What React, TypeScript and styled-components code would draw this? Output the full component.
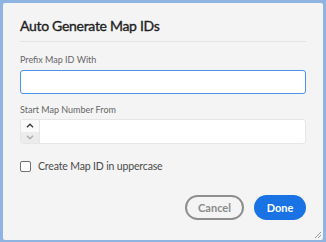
import React from 'react';
import styled, { createGlobalStyle } from 'styled-components';

const Global = createGlobalStyle`
  html, body {
    margin: 0;
    padding: 0;
    background: #8fb4e2;
  }
  * {
    box-sizing: border-box;
  }
`;

const Frame = styled.div`
  width: 326px;
  height: 242px;
  padding: 3px 3px 2px 3px;
  background: #8fb4e2;
  font-family: Lato, "Liberation Sans", sans-serif;
`;

const Dialog = styled.div`
  position: relative;
  height: 100%;
  background: #f4f4f4;
  border-radius: 2px;
  padding: 0 17px;
  display: flex;
  flex-direction: column;
`;

const Title = styled.div`
  font-size: 14px;
  letter-spacing: -0.3px;
  font-weight: 400;
  color: #1e1e1e;
  line-height: 22px;
  padding-top: 12px;
  padding-bottom: 4px;
  border-bottom: 1px solid #e3e3e3;
  -webkit-text-stroke: 0.35px #1e1e1e;
`;

const Label = styled.div`
  font-size: 9px;
  color: #666;
  line-height: 14px;
  margin-top: ${p => p.$top}px;
`;

const TextInput = styled.div`
  margin-top: ${p => p.$top}px;
  height: ${p => p.$h}px;
  background: #fff;
  border: 1px solid ${p => (p.$focused ? '#4b92e8' : '#e6e6e6')};
  border-radius: 3px;
  display: flex;
  overflow: hidden;
`;

const Stepper = styled.div`
  width: 19px;
  display: flex;
  flex-direction: column;
  border-right: 1px solid #e6e6e6;
`;

const StepBtn = styled.div`
  flex: 1;
  display: flex;
  align-items: center;
  justify-content: center;
  background: ${p => (p.$dim ? '#ececec' : '#fafafa')};
`;

const CheckRow = styled.div`
  margin-top: 14px;
  display: flex;
  align-items: center;
  gap: 7px;
  font-size: 10.5px;
  letter-spacing: -0.15px;
  line-height: 17px;
  color: #4a4a4a;
`;

const Box = styled.div`
  width: 11px;
  height: 11px;
  border: 1.5px solid #6f6f6f;
  border-radius: 2px;
  background: #fff;
`;

const Footer = styled.div`
  margin-top: 20px;
  display: flex;
  justify-content: flex-end;
  gap: 10px;
`;

const Button = styled.div`
  height: 25px;
  border-radius: 13px;
  display: flex;
  align-items: center;
  justify-content: center;
  font-size: 11px;
  font-weight: 700;
  width: ${p => p.$w}px;
  color: ${p => (p.$primary ? '#fff' : '#8a8a8a')};
  background: ${p => (p.$primary ? '#1a73e4' : 'transparent')};
  border: ${p => (p.$primary ? 'none' : '2px solid #8e8e8e')};
`;

const Grip = styled.svg`
  position: absolute;
  right: 1px;
  bottom: 1px;
`;

const Chevron = ({ up, color }) => (
  <svg width="8" height="5" viewBox="0 0 8 5">
    <path
      d={up ? 'M1 4.2 L4 1.2 L7 4.2' : 'M1 0.8 L4 3.8 L7 0.8'}
      fill="none"
      stroke={color}
      strokeWidth="1.3"
    />
  </svg>
);

export default function App() {
  return (
    <Frame>
      <Global />
      <Dialog>
        <Title>Auto Generate Map IDs</Title>
        <Label $top={11}>Prefix Map ID With</Label>
        <TextInput $focused $top={3} $h={24} />
        <Label $top={9}>Start Map Number From</Label>
        <TextInput $top={2} $h={25}>
          <Stepper>
            <StepBtn><Chevron up color="#333" /></StepBtn>
            <StepBtn $dim><Chevron color="#aaa" /></StepBtn>
          </Stepper>
        </TextInput>
        <CheckRow>
          <Box />
          Create Map ID in uppercase
        </CheckRow>
        <Footer>
          <Button $w={59}>Cancel</Button>
          <Button $w={52} $primary>Done</Button>
        </Footer>
        <Grip width="8" height="8" viewBox="0 0 8 8">
          <path d="M7 1 L1 7 M7 4 L4 7" stroke="#999" strokeWidth="1" />
        </Grip>
      </Dialog>
    </Frame>
  );
}
